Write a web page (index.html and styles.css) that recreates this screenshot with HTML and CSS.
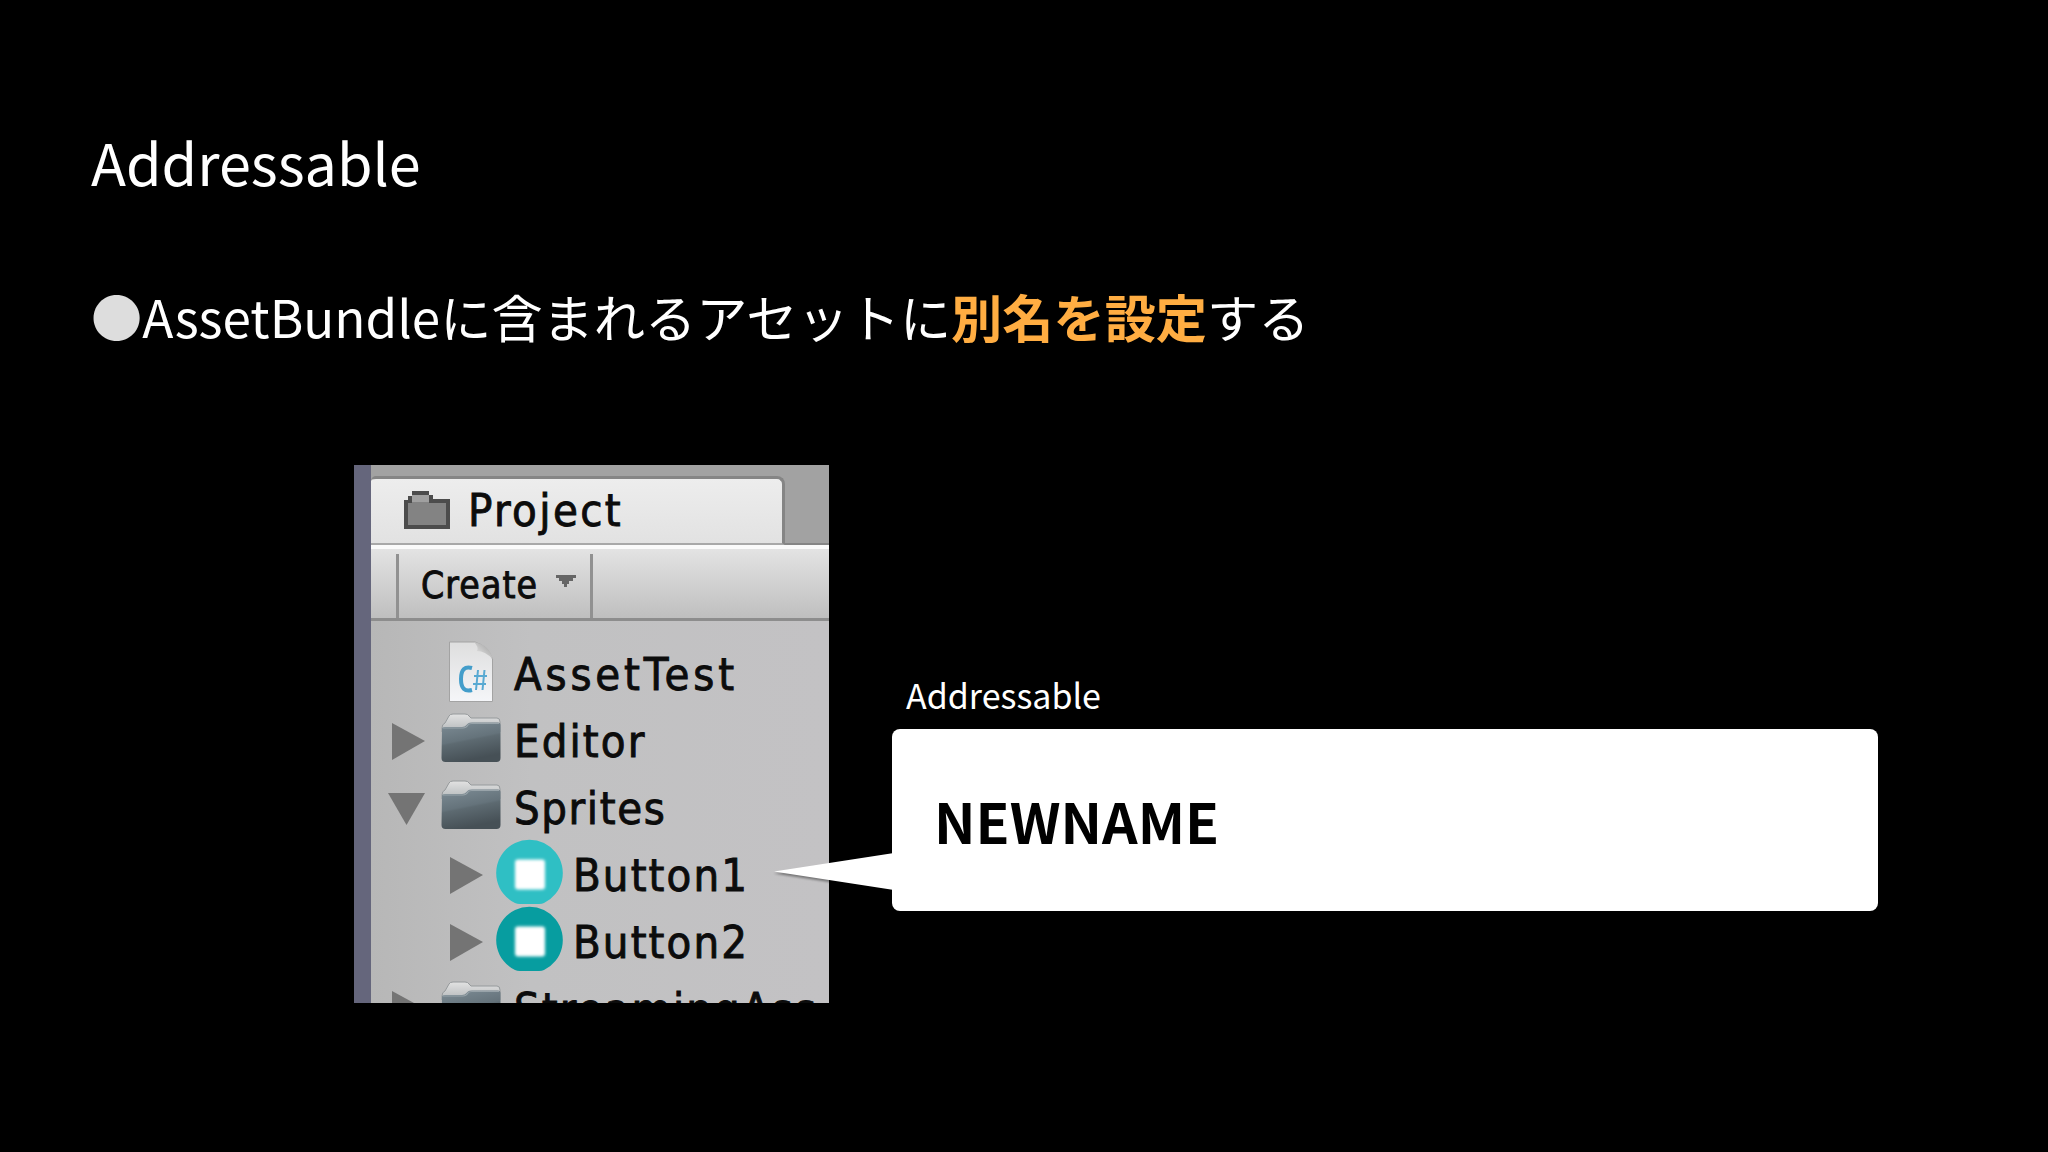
FILE: index.html
```html
<!DOCTYPE html>
<html lang="ja">
<head>
  <meta charset="UTF-8" />
  <meta name="viewport" content="width=device-width, initial-scale=1.0" />
  <title>Addressable</title>
  <link rel="stylesheet" href="styles.css">
</head>
<body>

  <!-- shared icons -->
  <svg class="defs" width="0" height="0">
    <defs>
      <linearGradient id="folderFront" x1="0" y1="0" x2="0.3" y2="1">
        <stop offset="0" stop-color="#7d8c95" />
        <stop offset="0.5" stop-color="#65737b" />
        <stop offset="0.55" stop-color="#5d6a71" />
        <stop offset="1" stop-color="#465056" />
      </linearGradient>
      <linearGradient id="folderBack" x1="0" y1="0" x2="0" y2="1">
        <stop offset="0" stop-color="#e2e2e2" />
        <stop offset="1" stop-color="#b4b8ba" />
      </linearGradient>
      <linearGradient id="paper" x1="0" y1="0" x2="0" y2="1">
        <stop offset="0" stop-color="#dedede" />
        <stop offset="1" stop-color="#f5f6f9" />
      </linearGradient>
      <linearGradient id="fold" x1="0" y1="1" x2="1" y2="0">
        <stop offset="0" stop-color="#f4f4f4" />
        <stop offset="1" stop-color="#969696" />
      </linearGradient>
      <filter id="soft"><feGaussianBlur stdDeviation="1.7" /></filter>
    </defs>
    <symbol id="arrow-right" viewBox="0 0 38 67">
      <path d="M4 14 L37 32 L4 51 Z" fill="#747474" />
    </symbol>
    <symbol id="arrow-down" viewBox="0 0 38 67">
      <path d="M0 17 H37 L18.500 49 Z" fill="#747474" />
    </symbol>
    <symbol id="folder" viewBox="0 0 60 67">
      <path d="M1 19 Q1 15 4 14 L8 7 Q9 5 12 5 H24 Q27 5 28 7 L30 9 H56 Q59 9 59 13 V23 H1 Z" fill="url(#folderBack)" stroke="#969a9c" stroke-width="1" />
      <path d="M1 20 Q1 18 4 18 H21 Q24 18 26 15.500 L27 14.500 Q28 13.500 31 13.500 H57 Q59.500 13.500 59.500 16 V49 Q59.500 53 55.500 53 H4.500 Q0.500 53 0.500 49 Z" fill="url(#folderFront)" />
      <path d="M2 19 H22 Q25 19 27 16 Q28 14.500 31 14.500 H58" fill="none" stroke="#98a3a9" stroke-width="1.200" />
    </symbol>
    <symbol id="button-ring" viewBox="0 0 67 67" overflow="visible">
      <path d="M19 60 A33.300 33.300 0 1 1 48 60 Q46 61 43 61 H24 Q21 61 19 60 Z" fill="currentColor" />
      <rect x="19" y="16.500" width="30" height="30" rx="3" fill="#fff" filter="url(#soft)" />
    </symbol>
  </svg>

  <main class="slide">
    <h1>Addressable</h1>
    <p class="lead"><span class="bullet">●</span>AssetBundleに含まれるアセットに<strong>別名を設定</strong>する</p>

    <div class="content">
      <div class="panel">
        <div class="tabs">
          <div class="tab">
            <svg width="46" height="38" viewBox="0 0 46 38">
              <path d="M0 9 H4 V5 H8 V0 H25 V4 H29 V8 H46 V38 H0 Z" fill="#4c4c4c" />
              <path d="M4 12 H8 V5 H25 V12 H42 V34 H4 Z" fill="#838383" />
              <path d="M8 4 H25 V11 H8 Z" fill="#a0a0a0" />
            </svg>
            <span>Project</span>
          </div>
        </div>
        <div class="toolbar">
          <div class="create">
            <span>Create</span>
            <svg width="20" height="12" viewBox="0 0 20 12">
              <path d="M0 0 H20 V3 H17 V6 H13 V9 H11 V12 H8 V9 H6 V6 H3 V3 H0 Z" fill="#666" />
            </svg>
          </div>
        </div>
        <div class="tree">
          <div class="row">
            <span class="arrow"></span>
            <svg class="icon" viewBox="0 0 60 67">
              <path d="M9 0 H34 Q47 4 51.500 17 V59.500 H8.500 V0 Z" fill="url(#paper)" stroke="#a3a3a3" stroke-width="1" />
              <path d="M33 0 Q38 5 36 9 Q44 9 51.500 17 Q49 3 33 0 Z" fill="url(#fold)" />
              <path d="M31 26 Q20 23 20 37 Q20 51 31 48" fill="none" stroke="#439dca" stroke-width="4" />
              <path d="M37 28 L35 48 M43.500 28 L41.500 48 M33 34 H46 M32 42 H45" fill="none" stroke="#58a9d2" stroke-width="2" />
            </svg>
            <span class="wide">AssetTest</span>
          </div>
          <div class="row">
            <svg class="arrow"><use href="#arrow-right" /></svg>
            <svg class="icon"><use href="#folder" /></svg>
            <span>Editor</span>
          </div>
          <div class="row">
            <svg class="arrow"><use href="#arrow-down" /></svg>
            <svg class="icon"><use href="#folder" /></svg>
            <span class="narrow">Sprites</span>
          </div>
          <div class="row child">
            <svg class="arrow"><use href="#arrow-right" /></svg>
            <svg class="icon light"><use href="#button-ring" /></svg>
            <span>Button1</span>
          </div>
          <div class="row child">
            <svg class="arrow"><use href="#arrow-right" /></svg>
            <svg class="icon dark"><use href="#button-ring" /></svg>
            <span>Button2</span>
          </div>
          <div class="row">
            <svg class="arrow"><use href="#arrow-right" /></svg>
            <svg class="icon"><use href="#folder" /></svg>
            <span>StreamingAss</span>
          </div>
        </div>
      </div>

      <div class="address">
        <div class="label">Addressable</div>
        <div class="callout">
          <svg class="tail" width="120" height="37" viewBox="0 0 120 37">
            <path d="M0 18.500 L120 0 V37 Z" fill="#fff" />
          </svg>
          NEWNAME
        </div>
      </div>
    </div>
  </main>

</body>
</html>
```

FILE: styles.css
```css
* {
  box-sizing: border-box;
}

body {
  margin: 0;
  background-color: #000;
  color: #fff;
  font-family: "Noto Sans CJK JP", sans-serif;
}

.defs {
  position: absolute;
}

.slide {
  width: 2048px;
  height: 1152px;
  padding: 131px 91px 0;
  overflow: hidden;
}

h1 {
  margin: 0;
  font-size: 57.5px;
  font-weight: 400;
  line-height: 60px;
}

.lead {
  margin: 95px 0 0;
  font-size: 51.2px;
  line-height: 60px;
  white-space: nowrap;
}

.lead strong {
  color: #ffad42;
  font-weight: 700;
}

.bullet {
  color: #ddd;
}

.content {
  display: flex;
  margin: 119px 0 0 263px;
}

/* project window */
.panel {
  width: 475px;
  height: 538px;
  overflow: hidden;
  border-left: 17px solid #65667c;
  background: linear-gradient(90deg, #b7b7b7, #c1c1c2 35%, #c3c2c4);
  color: #0c0c0c;
  font-family: "DejaVu Sans Condensed", "DejaVu Sans", sans-serif;
  font-stretch: condensed;
  font-size: 45px;
  letter-spacing: 2.1px;
  -webkit-text-stroke: 0.9px #0c0c0c;
}

.tabs {
  height: 80px;
  padding-top: 11px;
  background-color: #a2a2a2;
  border-bottom: 2px solid #858585;
}

.tab {
  display: flex;
  align-items: center;
  gap: 18px;
  width: 414px;
  height: 69px;
  padding: 0 0 2px 33px;
  border-top: 3px solid #858585;
  border-right: 3px solid #858585;
  border-bottom: 2px solid #a8a8a8;
  border-radius: 5px 8px 0 0;
  background: linear-gradient(#ededed, #e2e2e2);
  letter-spacing: 2.4px;
}

.toolbar {
  display: flex;
  height: 76px;
  padding: 5px 0 0 25px;
  border-top: 4px solid #fafafa;
  border-bottom: 3px solid #8d8d8d;
  background: linear-gradient(#e3e3e3, #bfbfbf);
}

.create {
  display: flex;
  align-items: center;
  gap: 18px;
  width: 197px;
  padding: 0 0 2px 22px;
  border-left: 3px solid #919191;
  border-right: 3px solid #919191;
  font-size: 37px;
  letter-spacing: 1.1px;
}

.create svg {
  margin-bottom: 8px;
}

.tree {
  padding-top: 21px;
}

.row {
  display: flex;
  align-items: center;
  height: 67px;
  padding-left: 17px;
  line-height: 65px;
  white-space: nowrap;
}

.row span {
  margin-top: -2px;
}

.row .arrow {
  flex: none;
  width: 38px;
  height: 67px;
}

.row .icon {
  flex: none;
  width: 60px;
  height: 67px;
  margin: 0 13px 0 15px;
  overflow: visible;
}

.row.child {
  padding-left: 75px;
}

.row.child .icon {
  width: 67px;
  margin: 0 10px 0 12px;
}

.wide {
  letter-spacing: 3.8px;
}

.narrow {
  letter-spacing: 1.6px;
}

.light {
  color: #2fbfc4;
}

.dark {
  color: #079da0;
}

/* balloon pointing at Button1 */
.address {
  margin: 212px 0 0 63px;
}

.label {
  padding-left: 14px;
  font-size: 34px;
  line-height: 36px;
}

.callout {
  position: relative;
  display: flex;
  align-items: center;
  width: 986px;
  height: 182px;
  margin-top: 16px;
  padding-left: 42px;
  border-radius: 8px;
  background-color: #fff;
  color: #000;
  font-size: 55.5px;
  font-weight: 700;
  line-height: 60px;
}

.tail {
  position: absolute;
  left: -118px;
  top: 124px;
  filter: drop-shadow(0 2px 1px rgba(0, 0, 0, 0.4));
  clip-path: inset(-4px 2px -4px -4px);
}
```
